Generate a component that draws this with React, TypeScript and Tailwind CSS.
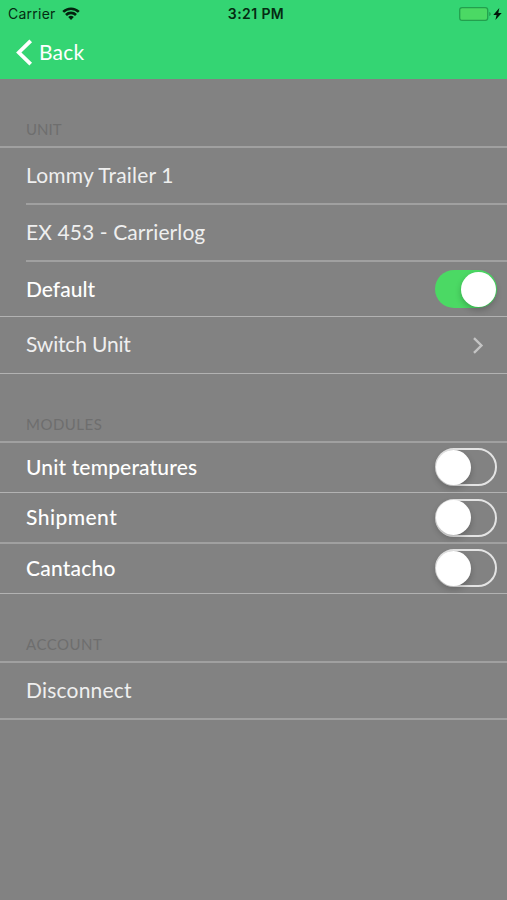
import { useState } from 'react'
import type { ReactNode } from 'react'
import clsx from 'clsx'

function StatusBar() {
  return (
    <div className="grid h-[27px] grid-cols-3 items-center pl-[8px] pr-[5px] text-[#052b12]">
      <div className="flex items-center gap-[6px]">
        <span className="text-[14px] tracking-[0.25px]">Carrier</span>
        <svg width="18" height="13" viewBox="0 0 18 13" fill="none" stroke="#03230e" strokeWidth="2.6">
          <path d="M1.200 4.900a11.200 11.200 0 0 1 15.600 0" />
          <path d="M4 8a7 7 0 0 1 10 0" />
          <path d="M9 13 6.200 10.100a4 4 0 0 1 5.600 0Z" fill="#03230e" stroke="none" />
        </svg>
      </div>
      <span className="pl-[2px] text-center text-[14px] font-semibold tracking-[0.4px]">3:21 PM</span>
      <div className="flex items-center justify-end gap-[2px]">
        <svg width="32" height="14" viewBox="0 0 32 14" fill="none">
          <rect x="0.7" y="0.7" width="28" height="12.6" rx="2.4" fill="#4bd964" stroke="#23a04e" strokeWidth="1.3" />
          <path d="M30.2 5v4c1-.3 1.5-1 1.5-2s-.5-1.700-1.500-2Z" fill="#23a04e" />
        </svg>
        <svg width="9" height="12" viewBox="0 0 9 12" fill="#03160a">
          <path d="M6.300 0 .3 7h3.300L2.400 12 8.700 4.900H5.300Z" />
        </svg>
      </div>
    </div>
  )
}

function NavBar() {
  return (
    <div className="flex h-[52px] items-center pb-[1px] pl-[16px]">
      <button type="button" className="flex items-center gap-[6px] text-white">
        <svg width="17" height="27" viewBox="0 0 17 27" fill="none" stroke="currentColor" strokeWidth="3.8">
          <path d="M14.700 1.800 2.800 13.500l11.900 11.700" />
        </svg>
        <span className="pb-[1px] font-[Lato,sans-serif] text-[21px] leading-[26px] tracking-[0.2px]">Back</span>
      </button>
    </div>
  )
}

function Toggle({ initial = false }: { initial?: boolean }) {
  const [on, setOn] = useState(initial)

  return (
    <button
      type="button"
      role="switch"
      aria-checked={on}
      onClick={() => setOn(!on)}
      className={clsx(
        'flex h-[38px] w-[62px] items-center rounded-full',
        on ? 'justify-end bg-[#4bd964] pr-[1px]' : 'justify-start border-2 border-[#e4e4e4]'
      )}
    >
      <span
        className={clsx(
          'size-[35px] shrink-0 rounded-full bg-white shadow-[0_3px_6px_rgba(0,0,0,0.22)]',
          !on && '-ml-[1px]'
        )}
      />
    </button>
  )
}

interface SectionProps {
  title: string
  className: string
  children: ReactNode
}

function Section({ title, className, children }: SectionProps) {
  return (
    <section>
      <h2 className={clsx('flex items-end border-b-2 border-[#a0a0a0] pl-[26px] text-[15px] leading-[18px] text-[#6e6e6e]', className)}>
        {title}
      </h2>
      {children}
    </section>
  )
}

interface RowProps {
  label: string
  // height, bottom line and letter spacing of the row
  className: string
  bold?: boolean
  inset?: boolean
  children?: ReactNode
}

function Row({ label, className, bold, inset, children }: RowProps) {
  return (
    <div className={clsx(inset && 'pl-[26px]')}>
      <div
        className={clsx(
          'flex items-center justify-between pr-[10px] text-[21px]',
          !inset && 'pl-[26px]',
          bold ? 'font-medium text-white' : 'text-[#efefef]',
          className
        )}
      >
        <span className={bold ? 'pb-[1px]' : 'pb-[2px]'}>{label}</span>
        {children}
      </div>
    </div>
  )
}

const thick = 'border-b-2 border-[#a0a0a0]'
const thin = 'border-b border-[#b2b2b2]'

export default function App() {
  return (
    <div className="h-[900px] w-[507px] overflow-hidden bg-[#828282] font-[Lato,sans-serif]">
      <header className="h-[79px] bg-[#34d573] font-[Inter,sans-serif]">
        <StatusBar />
        <NavBar />
      </header>

      <Section title="UNIT" className="h-[69px] pb-[8px]">
        <Row label="Lommy Trailer 1" className={clsx('h-[57px] tracking-[0.17px]', thick)} inset />
        <Row label="EX 453 - Carrierlog" className={clsx('h-[57px] tracking-[0.1px]', thick)} inset />
        <Row label="Default" className={clsx('h-[55px]', thin)} bold>
          <Toggle initial />
        </Row>
        <Row label="Switch Unit" className={clsx('h-[57px] tracking-[-0.17px]', thin)}>
          <svg className="mr-[13px]" width="12" height="17" viewBox="0 0 12 17" fill="none" stroke="#c4c4c4" strokeWidth="2.4">
            <path d="m2 1.200 7.400 7.300L2 15.800" />
          </svg>
        </Row>
      </Section>

      <Section title="MODULES" className="h-[69px] pb-[8px] tracking-[0.5px]">
        <Row label="Unit temperatures" className={clsx('h-[50px] pb-[1px] tracking-[0.15px]', thin)} bold>
          <Toggle />
        </Row>
        <Row label="Shipment" className={clsx('h-[51px] tracking-[0.45px]', thick)} bold>
          <Toggle />
        </Row>
        <Row label="Cantacho" className={clsx('h-[50px] pb-[1px] tracking-[0.22px]', thin)} bold>
          <Toggle />
        </Row>
      </Section>

      <Section title="ACCOUNT" className="h-[69px] pb-[8px] tracking-[0.5px]">
        <Row label="Disconnect" className={clsx('h-[57px] tracking-[0.2px]', thick)} />
      </Section>
    </div>
  )
}
